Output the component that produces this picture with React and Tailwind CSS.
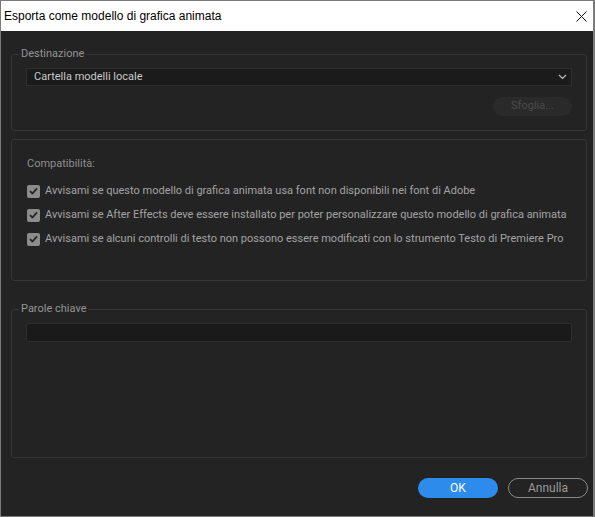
import React from "react";

const font = { fontFamily: "Roboto, 'Liberation Sans', sans-serif" };

function Check({ label }) {
  return (
    <div className="flex items-center h-[24px]">
      <div className="w-[13px] h-[13px] rounded-[2px] bg-[#8c8c8c] flex items-center justify-center shrink-0">
        <svg width="9" height="8" viewBox="0 0 9 8">
          <path d="M1 4.2 L3.4 6.5 L8 1.3" fill="none" stroke="#262626" strokeWidth="1.8" />
        </svg>
      </div>
      <span className="ml-[5px] text-[11px] leading-[14px] text-[#a3a3a3] whitespace-nowrap">{label}</span>
    </div>
  );
}

export default function App() {
  return (
    <div className="w-[595px] h-[517px] bg-[#7a7a7a] pt-[1px] pl-[1px] pr-[2px] pb-[1px] overflow-hidden">
      <div className="w-full h-full flex flex-col">
        <div
          className="h-[30px] bg-white flex items-center justify-between pl-[3px] pr-[6px] shrink-0"
          style={{ fontFamily: "'Liberation Sans', sans-serif" }}
        >
          <span className="text-[12px] text-black">Esporta come modello di grafica animata</span>
          <svg width="11" height="11" viewBox="0 0 11 11">
            <path d="M0.5 0.5 L10.5 10.5 M10.5 0.5 L0.5 10.5" stroke="#111" strokeWidth="1" />
          </svg>
        </div>
        <div className="flex-1 bg-[#232323] flex flex-col pl-[10px]" style={font}>
          <fieldset className="mt-[16px] w-[576px] h-[84px] border border-[#363636] rounded-[3px] px-[14px]">
            <legend className="ml-[-7px] px-[2px] text-[11px] leading-[14px] text-[#939393]">Destinazione</legend>
            <div className="mt-[7px] h-[18px] bg-[#1b1b1b] border border-[#2e2e2e] flex items-center justify-between pl-[7px] pr-[4px]">
              <span className="text-[11px] text-[#c9c9c9]">Cartella modelli locale</span>
              <svg width="9" height="6" viewBox="0 0 9 6">
                <path d="M1 1 L4.5 4.5 L8 1" fill="none" stroke="#bdbdbd" strokeWidth="1.2" />
              </svg>
            </div>
            <div className="flex justify-end mt-[11px]">
              <div className="w-[79px] h-[19px] rounded-full bg-[#2a2a2a] flex items-center justify-center text-[11px] text-[#4a4a4a]">
                Sfoglia...
              </div>
            </div>
          </fieldset>
          <div className="mt-[8px] w-[576px] h-[142px] border border-[#363636] rounded-[3px] pl-[15px] pt-[17px]">
            <div className="text-[11px] leading-[14px] text-[#8f8f8f]">Compatibilità:</div>
            <div className="mt-[8px] flex flex-col">
              <Check label="Avvisami se questo modello di grafica animata usa font non disponibili nei font di Adobe" />
              <Check label="Avvisami se After Effects deve essere installato per poter personalizzare questo modello di grafica animata" />
              <Check label="Avvisami se alcuni controlli di testo non possono essere modificati con lo strumento Testo di Premiere Pro" />
            </div>
          </div>
          <fieldset className="mt-[21px] w-[576px] h-[156px] border border-[#363636] rounded-[3px] px-[14px]">
            <legend className="ml-[-7px] px-[2px] text-[11px] leading-[14px] text-[#939393]">Parole chiave</legend>
            <div className="mt-[7px] h-[19px] bg-[#1a1a1a] border border-[#2e2e2e] rounded-[2px]"></div>
          </fieldset>
          <div className="flex justify-end gap-[10px] mt-[20px] pr-[5px]">
            <div className="w-[80px] h-[20px] rounded-full bg-[#2d8ceb] flex items-center justify-center text-[12px] text-white">OK</div>
            <div className="w-[80px] h-[20px] rounded-full border border-[#8a8a8a] flex items-center justify-center text-[12px] text-[#9a9a9a]">Annulla</div>
          </div>
        </div>
      </div>
    </div>
  );
}
